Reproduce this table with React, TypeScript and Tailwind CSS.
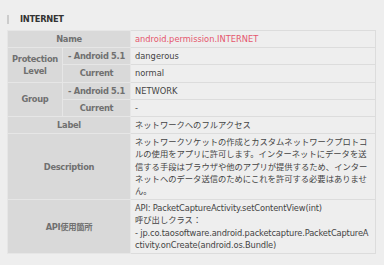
import React from "react";

const th =
  "bg-[#d9d9d9] text-[#707070] font-bold text-center align-middle border border-[#e6e6e6] px-1 py-[2px] tracking-[-0.3px]";
const td =
  "bg-[#eeeeee] text-[#444444] text-left align-top border border-[#dcdcdc] pl-[4px] pr-[3px] py-[2px] break-all";

export default function App() {
  return (
    <div
      className="w-[384px] h-[265px] bg-[#eeeeee] overflow-hidden"
      style={{ fontFamily: '"DejaVu Sans", "Noto Sans CJK JP", sans-serif' }}
    >
      <div className="flex items-center pl-[7px] pt-[9px] h-[20px] box-content">
        <div className="w-[2px] h-[9px] bg-[#cccccc]" />
        <div className="ml-[11px] text-[8.3px] leading-[12px] font-bold text-[#333333] tracking-[-0.3px]">
          INTERNET
        </div>
      </div>
      <div className="pl-[7px] pr-[8px] pt-[1px]">
        <table className="w-full border-collapse text-[8.3px] leading-[12.2px] table-fixed">
          <colgroup>
            <col className="w-[55px]" />
            <col className="w-[68px]" />
            <col />
          </colgroup>
          <tbody>
            <tr>
              <th colSpan={2} className={th}>Name</th>
              <td className={td + " text-[#e5566d]"}>android.permission.INTERNET</td>
            </tr>
            <tr>
              <th rowSpan={2} className={th}>
                Protection
                <br />
                Level
              </th>
              <th className={th}>- Android 5.1</th>
              <td className={td}>dangerous</td>
            </tr>
            <tr>
              <th className={th}>Current</th>
              <td className={td}>normal</td>
            </tr>
            <tr>
              <th rowSpan={2} className={th}>Group</th>
              <th className={th}>- Android 5.1</th>
              <td className={td}>NETWORK</td>
            </tr>
            <tr>
              <th className={th}>Current</th>
              <td className={td}>-</td>
            </tr>
            <tr>
              <th colSpan={2} className={th}>Label</th>
              <td className={td}>ネットワークへのフルアクセス</td>
            </tr>
            <tr>
              <th colSpan={2} className={th}>Description</th>
              <td className={td}>
                ネットワークソケットの作成とカスタムネットワークプロトコルの使用をアプリに許可します。インターネットにデータを送信する手段はブラウザや他のアプリが提供するため、インターネットへのデータ送信のためにこれを許可する必要はありません。
              </td>
            </tr>
            <tr>
              <th colSpan={2} className={th}>API使用箇所</th>
              <td className={td}>
                <span className="tracking-[-0.15px]">API: PacketCaptureActivity.setContentView(int)</span>
                <br />
                呼び出しクラス：
                <br />
                <span className="tracking-[-0.15px]">
                  - jp.co.taosoftware.android.packetcapture.PacketCaptureActivity.onCreate(android.os.Bundle)
                </span>
              </td>
            </tr>
          </tbody>
        </table>
      </div>
    </div>
  );
}
